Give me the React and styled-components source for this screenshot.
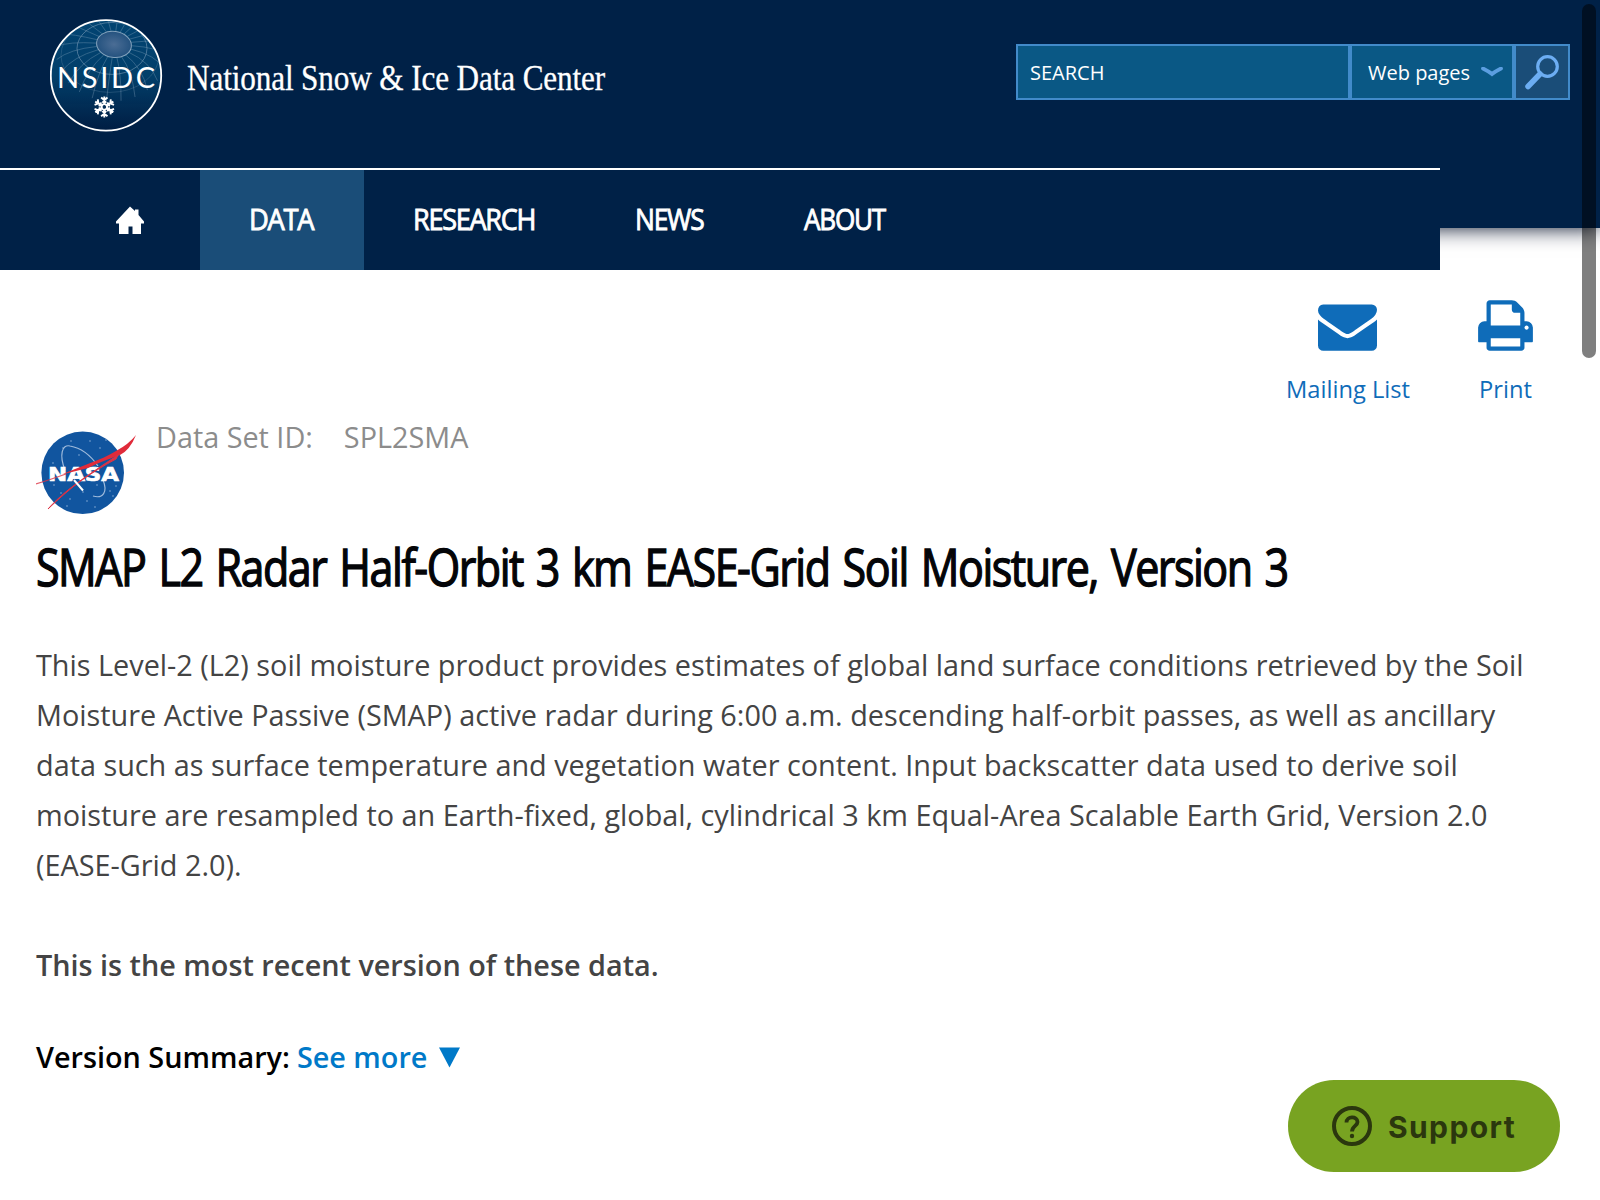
import React from "react";
import styled, { createGlobalStyle } from "styled-components";

const GlobalStyle = createGlobalStyle`
  * { box-sizing: border-box; }
  body { margin: 0; background: #fff; overflow: hidden; }
  a { color: inherit; text-decoration: none; }
  svg { display: block; flex: none; }
`;

const Page = styled.div`
  position: relative;
  height: 1200px;
  overflow: hidden;
  font-family: "Open Sans", "Noto Sans", sans-serif;
  color: #444;
`;
const Header = styled.header`
  height: 228px;
  background: #002147;
  box-shadow: 0 0 20px #000d26;
`;
const Masthead = styled.div`
  display: flex;
  justify-content: space-between;
  height: 168px;
  padding: 19px 30px 0 50px;
`;
const Brand = styled.a`
  display: flex;
  align-items: flex-start;
  gap: 24px;
  color: #fff;
`;
const BrandName = styled.span`
  padding-top: 41px;
  font: 35px/38px "Liberation Serif", serif;
  -webkit-text-stroke: 0.3px #fff;
  letter-spacing: -0.15px;
  white-space: nowrap;
  transform: scaleX(${(p) => p.$stretch});
  transform-origin: left;
`;
const SearchForm = styled.form`
  display: flex;
  height: 56px;
  margin: 25px 0 0;
  font-size: 20px;
  line-height: 52px;
  color: #fff;
`;
const SearchField = styled.div`
  display: flex;
  align-items: center;
  justify-content: space-between;
  width: ${(p) => p.$width}px;
  padding: ${(p) => p.$top || 0}px ${(p) => p.$right || 0}px 0 ${(p) => p.$left || 0}px;
  background: ${(p) => p.$bg || "#0a5885"};
  border: 2px solid #428bca;
`;
const Nav = styled.nav`
  display: flex;
  width: 1440px;
  height: 102px;
  padding-left: 67px;
  background: #002147;
  border-top: 2px solid #fff;
`;
const NavItem = styled.a`
  position: relative;
  display: flex;
  width: ${(p) => p.$width}px;
  padding-left: 49px;
  background: ${(p) => (p.$active ? "#1a4d78" : "transparent")};
  color: #fff;
  font-size: 30px;
  line-height: 98px;
  letter-spacing: -1.4px;
  -webkit-text-stroke: 0.9px #fff;
`;
const Condensed = styled.span`
  display: inline-block;
  white-space: nowrap;
  transform: scaleX(${(p) => p.$stretch});
  transform-origin: left;
`;
const HomeIcon = styled.svg`
  margin-top: 36px;
`;
const Main = styled.main`
  padding: 66px 36px 0;
`;
const Actions = styled.div`
  display: flex;
  justify-content: flex-end;
  gap: 66px;
  padding-right: 29px;
  height: 131px;
`;
const Action = styled.a`
  display: flex;
  flex-direction: column;
  align-items: center;
  gap: 18px;
  padding-top: 2px;
  font-size: 23.7px;
  line-height: 32px;
  color: #0f6cb9;
  height: 110px;
`;
const DataSet = styled.div`
  display: flex;
  gap: 19px;
  height: 100px;
  font-size: 28.8px;
  line-height: 24px;
  color: #8c8c8c;
`;
const NasaLogo = styled.svg`
  margin-top: 5px;
`;
const DataSetText = styled.div`
  display: flex;
  gap: 31px;
`;
const Title = styled.h1`
  margin: 3px 0 0;
  height: 76px;
  font-size: 52px;
  font-weight: 400;
  line-height: 76px;
  letter-spacing: -1.8px;
  word-spacing: 4px;
  -webkit-text-stroke: 1.4px #040508;
  color: #040508;
`;
const Description = styled.p`
  margin: 36px 0 50px;
  font-size: 28.82px;
  line-height: 50px;
  white-space: nowrap;
`;
const Recent = styled.p`
  margin: 0;
  font-size: 28.8px;
  font-weight: 600;
  line-height: 50px;
`;
const Summary = styled.div`
  display: flex;
  align-items: center;
  gap: 7px;
  margin-top: 42px;
  font-size: 28.8px;
  font-weight: 600;
  line-height: 50px;
  color: #000;
`;
const MoreLink = styled.a`
  display: flex;
  align-items: center;
  gap: 12px;
  color: #0079c8;
`;
const Support = styled.button`
  position: absolute;
  right: 40px;
  bottom: 28px;
  display: flex;
  align-items: center;
  gap: 16px;
  width: 272px;
  height: 92px;
  padding: 0 0 0 44px;
  border: 0;
  border-radius: 46px;
  background: #78a321;
  color: #2b370e;
  font: 700 30px/40px Inter, sans-serif;
  letter-spacing: 1.4px;
`;
const SupportLabel = styled.span`
  padding-top: 2px;
`;
const Scrollbar = styled.div`
  position: absolute;
  top: 4px;
  right: 4px;
  width: 14px;
  height: 354px;
  border-radius: 7px;
  background: rgba(0, 0, 0, 0.5);
`;

const NsidcLogo = () => (
  <svg width="113" height="113" viewBox="0 -0.4 113 113">
    <defs>
      <linearGradient id="globe" x1="0" y1="0" x2="0" y2="1">
        <stop offset="0" stopColor="#034573" />
        <stop offset=".5" stopColor="#03406b" />
        <stop offset="1" stopColor="#001d43" />
      </linearGradient>
      <radialGradient id="pole">
        <stop offset="0" stopColor="#4b6d95" />
        <stop offset="1" stopColor="#24527f" />
      </radialGradient>
      <clipPath id="disc"><circle cx="56" cy="56" r="54" /></clipPath>
    </defs>
    <circle cx="56" cy="56" r="55" fill="url(#globe)" />
    <g clipPath="url(#disc)" fill="none" stroke="#84a3bd">
      <g strokeWidth=".8" opacity=".45">
        {Array.from({ length: 24 }, (_, i) => {
          const a = (i * Math.PI) / 12 + 0.1;
          const c = Math.cos(a);
          const s = Math.sin(a);
          const x = 64 + 17.5 * c;
          const y = 25 + 13 * s;
          return (
            <path key={i} d={`M${x} ${y}Q${64 + 45 * c} ${25 + 30 * s} ${62 + 56 * c} ${32 + 50 * s}`} />
          );
        })}
      </g>
      <ellipse cx="62" cy="29" rx="35" ry="26" strokeWidth="1" opacity=".55" />
      <ellipse cx="60" cy="36" rx="49" ry="37" strokeWidth=".8" opacity=".3" />
      <ellipse cx="64" cy="25" rx="17.5" ry="13" fill="url(#pole)" strokeWidth="1" transform="rotate(8 64 25)" />
    </g>
    <circle cx="56" cy="56" r="55.2" fill="none" stroke="#fff" strokeWidth="1.8" />
    <text x="7" y="69" fill="#fff" fontFamily="Lato, sans-serif" fontSize="29" textLength="98">NSIDC</text>
    <g transform="translate(54.3 87.5)" stroke="#fff" strokeWidth="1.9" fill="none">
      {[0, 60, 120, 180, 240, 300].map((r) => (
        <path key={r} transform={`rotate(${r})`} d="M0-2V-10.5M-3.2-9.4L0-6.8 3.2-9.4M-2-5.4L0-3.8 2-5.4" />
      ))}
      <circle r="2.8" />
    </g>
  </svg>
);

const STARS = [[35, 11], [54, 11], [27, 18], [70, 10], [64, 18], [43, 25], [17, 33], [25, 63], [34, 69], [31, 76], [51, 71], [59, 77], [47, 62], [74, 61], [77, 66], [80, 56], [61, 55], [18, 55]];

const Nasa = () => (
  <NasaLogo width="101" height="86" viewBox="0 0 101 86">
    <circle cx="46.7" cy="42.8" r="41.3" fill="#11559f" />
    <g fill="#8fb0d8">
      {STARS.map(([x, y]) => (
        <circle key={`${x}-${y}`} cx={x} cy={y} r=".9" opacity=".6" />
      ))}
    </g>
    <path d="M29 40C23 25 26 14 34 16C46 18 55 26 62 36M67 50C72 62 67 69 57 66" fill="none" stroke="#9fbbdc" strokeWidth="1.2" />
    <text x="12" y="50.5" fill="#fff" stroke="#fff" strokeWidth=".7" fontFamily="'DejaVu Sans', sans-serif" fontWeight="700" fontSize="20" textLength="71" lengthAdjust="spacingAndGlyphs">NASA</text>
    <path d="M26 44.5C44 36 64 31 80 21Q93 14 100 5Q94 20 84 25C70 30 62 33 52 38Q40 41 26 44.5Z" fill="#e02b3a" />
    <path d="M0 54Q13 50 30 44" fill="none" stroke="#dc3345" strokeWidth="1.2" opacity=".8" />
    <path d="M12 79C29 60 49 47 82 25L80 29C54 43 36 56 12 79Z" fill="#dc3345" stroke="#dc3345" strokeWidth="1" />
    <path d="M38 50L47 60.500" stroke="#fff" strokeWidth="2" />
  </NasaLogo>
);

const NAV = [
  { label: "DATA", width: 164, stretch: 0.91, active: true },
  { label: "RESEARCH", width: 222, stretch: 0.9 },
  { label: "NEWS", width: 169, stretch: 0.88 },
  { label: "ABOUT", width: 180, stretch: 0.87 },
];

const LINES = [
  "This Level-2 (L2) soil moisture product provides estimates of global land surface conditions retrieved by the Soil",
  "Moisture Active Passive (SMAP) active radar during 6:00 a.m. descending half-orbit passes, as well as ancillary",
  "data such as surface temperature and vegetation water content. Input backscatter data used to derive soil",
  "moisture are resampled to an Earth-fixed, global, cylindrical 3 km Equal-Area Scalable Earth Grid, Version 2.0",
  "(EASE-Grid 2.0).",
];

export default function App() {
  return (
    <Page>
      <GlobalStyle />
      <Header>
        <Masthead>
          <Brand href="#">
            <NsidcLogo />
            <BrandName $stretch={0.892}>National Snow &amp; Ice Data Center</BrandName>
          </Brand>
          <SearchForm>
            <SearchField $width={334} $left={12} $top={2}>SEARCH</SearchField>
            <SearchField $width={164} $left={16} $right={9} $top={2}>
              Web pages
              <svg width="22" height="12" viewBox="0 0 22 12">
                <path d="M2 1.5Q8 4.5 11 7Q14 4.5 20 1.5" fill="none" stroke="#5c9ee0" strokeWidth="3.8" strokeLinecap="round" />
              </svg>
            </SearchField>
            <SearchField $width={56} $left={7} $bg="#1a4d78">
              <svg width="38" height="40" viewBox="0 0 38 40">
                <circle cx="24.5" cy="14.5" r="9.8" fill="none" stroke="#6cadf2" strokeWidth="3.2" />
                <path d="M17 22L5 34.5" stroke="#6cadf2" strokeWidth="5.5" strokeLinecap="round" />
              </svg>
            </SearchField>
          </SearchForm>
        </Masthead>
        <Nav>
          <NavItem href="#" $width={133}>
            <HomeIcon width="28" height="28" viewBox="0 0 28 28">
              <path d="M14 .5L19 5V3.5H22.5V9L28 15.5V17.5H25V28H16.5V20.5H12.5V28H3V17.5H0V15.5Z" fill="#fff" />
            </HomeIcon>
          </NavItem>
          {NAV.map((n) => (
            <NavItem key={n.label} href="#" $width={n.width} $active={n.active}>
              <Condensed $stretch={n.stretch}>{n.label}</Condensed>
            </NavItem>
          ))}
        </Nav>
      </Header>
      <Main>
        <Actions>
          <Action href="#">
            <svg width="59" height="59" viewBox="0 0 1792 1792" fill="currentColor">
              <path d="M1792 710v794q0 66-47 113t-113 47h-1472q-66 0-113-47t-47-113v-794q44 49 101 87 362 246 497 345 57 42 92.5 65.5t94.5 48 110 24.5h2q51 0 110-24.5t94.5-48 92.5-65.5q170-123 498-345 57-39 100-87zm0-294q0 79-49 151t-122 123q-376 261-468 325-10 7-42.5 31t-54 38.5-52 32.5-57.5 27-50 9h-2q-23 0-50-9t-57.5-27-52-32.5-54-38.5-42.5-31q-91-64-262-182.5t-205-142.5q-62-42-117-115.5t-55-136.5q0-78 41.5-130t118.5-52h1472q65 0 112.5 47t47.5 113z" />
            </svg>
            Mailing List
          </Action>
          <Action href="#">
            <svg width="59" height="59" viewBox="0 0 1792 1792" fill="currentColor">
              <path d="M448 1536h896v-256h-896v256zm0-640h896v-384h-160q-40 0-68-28t-28-68v-160h-640v640zm1152 64q0-26-19-45t-45-19-45 19-19 45 19 45 45 19 45-19 19-45zm128 0v416q0 13-9.5 22.5t-22.5 9.5h-224v160q0 40-28 68t-68 28h-960q-40 0-68-28t-28-68v-160h-224q-13 0-22.5-9.5t-9.5-22.5v-416q0-79 56.5-135.5t135.5-56.5h64v-544q0-40 28-68t68-28h672q40 0 88 20t76 48l152 152q28 28 48 76t20 88v256h64q79 0 135.5 56.5t56.5 135.5z" />
            </svg>
            Print
          </Action>
        </Actions>
        <DataSet>
          <Nasa />
          <DataSetText>
            <span>Data Set ID:</span>
            <span>SPL2SMA</span>
          </DataSetText>
        </DataSet>
        <Title>
          <Condensed $stretch={0.8275}>SMAP L2 Radar Half-Orbit 3 km EASE-Grid Soil Moisture, Version 3</Condensed>
        </Title>
        <Description>
          {LINES.map((line) => (
            <React.Fragment key={line}>{line}<br /></React.Fragment>
          ))}
        </Description>
        <Recent>This is the most recent version of these data.</Recent>
        <Summary>
          Version Summary:
          <MoreLink href="#">
            See more
            <svg width="21" height="21" viewBox="0 0 21 21"><path d="M0 .5H21L10.5 20.5Z" fill="currentColor" /></svg>
          </MoreLink>
        </Summary>
      </Main>
      <Support>
        <svg width="40" height="40" viewBox="0 0 40 40" fill="none" stroke="currentColor">
          <circle cx="20" cy="20" r="18" strokeWidth="4" />
          <path d="M14.5 16.5C14.5 9.8 25.5 9.8 25.5 16C25.5 20 20 20 20 25.5" strokeWidth="3.8" />
          <circle cx="20" cy="30" r="2.2" fill="currentColor" stroke="none" />
        </svg>
        <SupportLabel>Support</SupportLabel>
      </Support>
      <Scrollbar />
    </Page>
  );
}
